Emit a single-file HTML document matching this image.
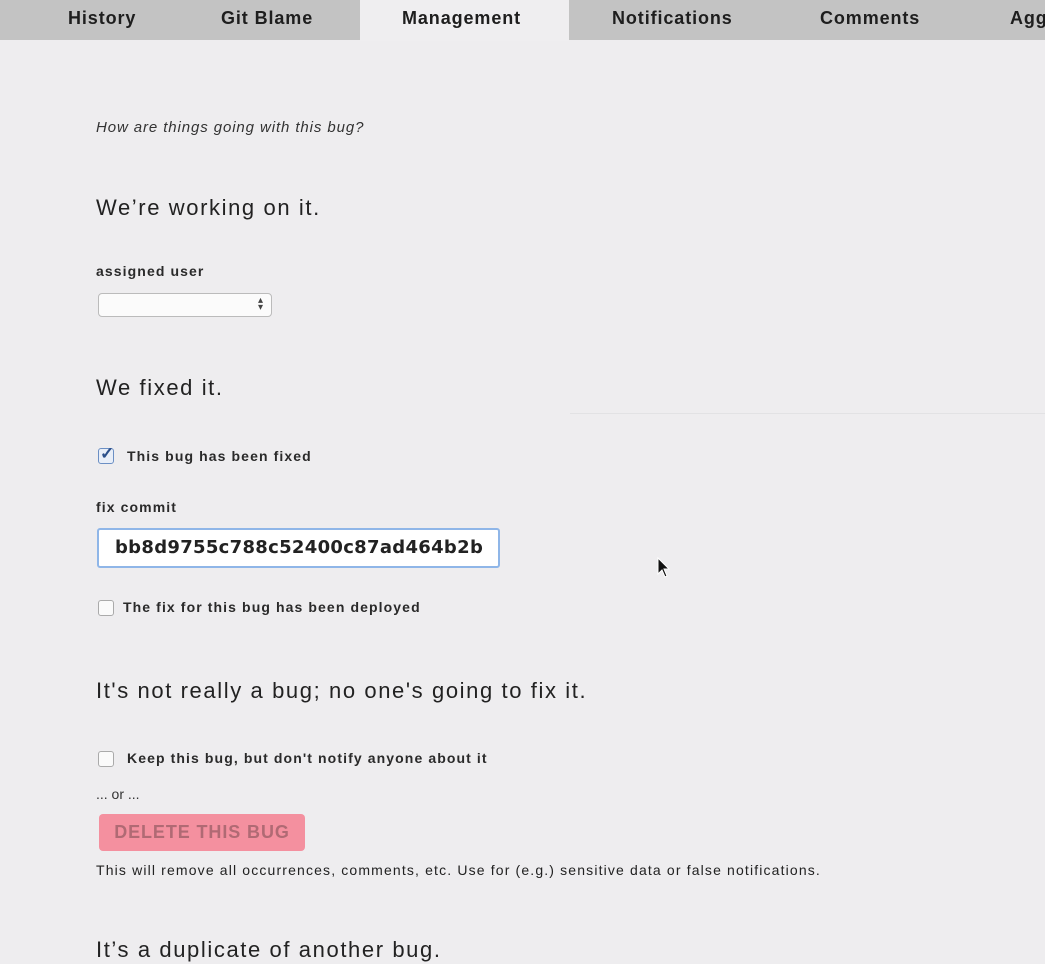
<!DOCTYPE html>
<html><head><meta charset="utf-8"><style>
body{margin:0;width:1045px;height:964px;background:#eeedef;font-family:"Liberation Sans",sans-serif;color:#222;position:relative;overflow:hidden}
.tabs{position:absolute;left:0;top:0;width:1045px;height:40px;background:#c3c3c3}
.tab{position:absolute;top:0;height:40px;line-height:36px;font-size:18px;font-weight:bold;color:#1e1e1e;letter-spacing:0.9px;white-space:nowrap}
.a{position:absolute;white-space:nowrap}
.h{font-size:22px;color:#222;letter-spacing:1.6px}
.s{font-size:14px;font-weight:bold;color:#2a2a2a;letter-spacing:1.1px}
.cb{position:absolute;width:14px;height:14px;border:1px solid #aaa;border-radius:3px;background:#fafafa}
</style></head><body>
<div class="tabs">
<div class="tab" style="left:68px">History</div>
<div class="tab" style="left:221px">Git Blame</div>
<div style="position:absolute;left:360px;top:0;width:209px;height:41px;background:#efeef0"></div>
<div class="tab" style="left:402px">Management</div>
<div class="tab" style="left:612px">Notifications</div>
<div class="tab" style="left:820px">Comments</div>
<div class="tab" style="left:1010px">Agg</div>
</div>
<div class="a" style="left:96px;top:119px;font-size:15px;font-style:italic;color:#333;letter-spacing:0.9px">How are things going with this bug?</div>
<div class="a h" style="left:96px;top:195px">We’re working on it.</div>
<div class="a s" style="left:96px;top:263px">assigned user</div>
<div class="a" style="left:98px;top:293px;width:174px;height:24px;border:1px solid #bbb;border-radius:4px;background:#fbfbfb;box-sizing:border-box"><span style="position:absolute;right:8px;top:3px;font-size:10px;line-height:7px;color:#444">▴<br>▾</span></div>
<div class="a h" style="left:96px;top:375px">We fixed it.</div>
<div class="a" style="left:570px;top:413px;width:475px;height:1px;background:#e2e2e4"></div>
<div class="cb" style="left:98px;top:448px;border-color:#6b8fc4;background:#e8eef8"></div>
<div class="a" style="left:100px;top:444px;font-size:17px;color:#2b4f8a;font-weight:bold">✓</div>
<div class="a s" style="left:127px;top:448px">This bug has been fixed</div>
<div class="a s" style="left:96px;top:499px">fix commit</div>
<div class="a" style="left:97px;top:528px;width:403px;height:40px;border:2px solid #8fb6e8;border-radius:3px;background:#fff;box-sizing:border-box;font-family:'DejaVu Sans',sans-serif;font-size:18px;font-weight:bold;line-height:36px;padding-left:16px;color:#222;letter-spacing:0.3px">bb8d9755c788c52400c87ad464b2b</div>
<div class="cb" style="left:98px;top:600px"></div>
<div class="a s" style="left:123px;top:599px">The fix for this bug has been deployed</div>
<div class="a h" style="left:96px;top:678px">It's not really a bug; no one's going to fix it.</div>
<div class="cb" style="left:98px;top:751px"></div>
<div class="a s" style="left:127px;top:750px">Keep this bug, but don't notify anyone about it</div>
<div class="a" style="left:96px;top:786px;font-size:14px;color:#333">... or ...</div>
<div class="a" style="left:99px;top:814px;width:206px;height:37px;background:#f4909f;border-radius:4px;font-size:18px;font-weight:bold;color:#b06a74;line-height:37px;text-align:center;letter-spacing:0.9px">DELETE THIS BUG</div>
<div class="a" style="left:96px;top:862px;font-size:14px;color:#222;letter-spacing:1.15px">This will remove all occurrences, comments, etc. Use for (e.g.) sensitive data or false notifications.</div>
<div class="a h" style="left:96px;top:937px">It’s a duplicate of another bug.</div>
<svg class="a" style="left:657px;top:557px" width="14" height="22" viewBox="0 0 14 22"><path d="M1 1 L1 17 L5 13 L8 20 L10 19 L7 12 L12 12 Z" fill="#111" stroke="#fff" stroke-width="1"/></svg>
</body></html>
